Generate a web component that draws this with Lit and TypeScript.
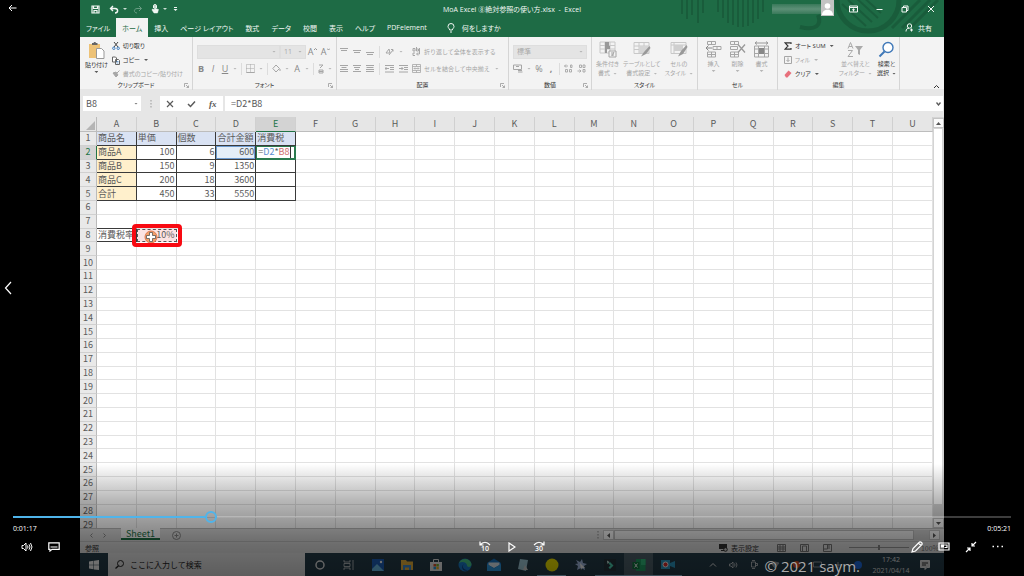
import { LitElement, html, svg, css, nothing } from "lit";
import { customElement } from "lit/decorators.js";
import { classMap } from "lit/directives/class-map.js";
import { styleMap } from "lit/directives/style-map.js";

const icon = (w: number, h: number, body: unknown) =>
  html`<svg width=${w} height=${h} viewBox="0 0 ${w} ${h}" fill="none" stroke="currentColor" aria-hidden="true">${body}</svg>`;
const caret = html`<i class="caret"></i>`;

const reset = css`
  *, *::before, *::after { box-sizing: border-box; }
  button, input, select {
    font: inherit; color: inherit; background: none; border: 0; padding: 0; margin: 0;
    border-radius: 0; appearance: none; outline: 0; min-width: 0;
  }
  button { display: inline-flex; align-items: center; justify-content: center; white-space: nowrap; }
  svg { display: block; flex: none; }
  .caret {
    flex: none; width: 4px; height: 2px; background: currentColor; opacity: .8;
    clip-path: polygon(0 0, 100% 0, 50% 100%);
  }
  .grow { flex: 1; }
`;

@customElement("excel-title")
class ExcelTitle extends LitElement {
  static styles = [reset, css`
    :host { display: block; position: relative; background: #1e6b45; color: #f2f7f4; font-size: 7px; overflow: hidden; }
    .art { position: absolute; right: 0; top: 0; }
    .bar { position: relative; display: grid; grid-template-columns: 1fr auto 1fr; align-items: center; height: 18px; }
    .quick { display: flex; align-items: center; gap: 4px; padding-left: 11px; }
    .quick button + button { margin-left: 5px; }
    .quick .caret + button { margin-left: 2px; }
    .dim { opacity: .35; }
    .title { white-space: pre; }
    .sys { display: flex; align-items: center; justify-content: flex-end; height: 18px; }
    .name { width: 49px; height: 10px; background: linear-gradient(#39795a, #5d9077, #39795a); }
    .face { width: 13px; height: 16px; margin: 0 6px 2px 0; background: #c3c3c3; }
    .sys button { width: 26px; }
    .tabs { position: relative; display: flex; align-items: stretch; height: 19px; padding-right: 12px; }
    .tabs button { padding: 0 6px; }
    .tabs .on { background: #f3f3f3; color: #1e6b45; }
    .tabs .tell { gap: 7px; padding-left: 14px; }
    .tabs .share { gap: 4px; padding: 0; }
  `];
  render() {
    const tabs = ["ファイル", "ホーム", "挿入", "ページ レイアウト", "数式", "データ", "校閲", "表示", "ヘルプ", "PDFelement"];
    return html`
      <svg class="art" width="270" height="37" viewBox="0 0 270 37" fill="none" stroke="#195c3b" stroke-width="2" aria-hidden="true">
        <path d="M8 0v14M13 0v19M18 0v15M24 0v23M29 0v13M44 0v12M49 0v18M54 0v23M59 0v25M64 0v27M69 0v27M74 0v26M79 0v23M84 0v19M89 0v12"/>
        <circle cx="194" cy="0" r="31" stroke-width="5"/>
        <path d="M126 27c16 4 22-2 18-12" stroke-width="4"/>
        <path d="M168 4l24 22M174 0l24 22M180 -4l24 22M187 -5l20 18" stroke-width="2"/>
        <path d="M218 28L246 0M228 28L256 0M238 26L264 0" stroke-width="3"/>
      </svg>
      <div class="bar">
        <div class="quick">
          <button aria-label="保存">${icon(9, 9, svg`<path d="M1 1h7v7H1zM2.500 1v2.500h4V1M3 8V5.500h3V8" stroke-width="1.200"/>`)}</button>
          <button aria-label="元に戻す">${icon(10, 9, svg`<path d="M4 1L1.500 3.500 4 6M1.500 3.500h4.500c4 .5 3 4.500 0 4.500" stroke-width="1.400"/>`)}</button>${caret}
          <button class="dim" aria-label="やり直し">${icon(10, 9, svg`<path d="M6 1l2.500 2.500L6 6M8.500 3.500H4C0 4 1 8 4 8"/>`)}</button><span class="dim">${caret}</span>
          <button aria-label="タッチ">${icon(8, 10, svg`<path d="M2.500 4V2a1.500 1.500 0 0 1 3 0v2" /><path d="M3.400 1.500v4L1.500 5 1 6l2 3h3.500L7.500 5.500 4.700 4.500v-3z" fill="currentColor" stroke-width=".5"/>`)}</button>${caret}
          <button aria-label="カスタマイズ">${icon(5, 5, svg`<path d="M1 .5h3"/><path d="M.5 2h4l-2 2z" fill="currentColor" stroke="none"/>`)}</button>
        </div>
        <div class="title">MoA Excel ⑧絶対参照の使い方.xlsx  -  Excel</div>
        <div class="sys">
          <span class="name"></span>
          <span class="face">${icon(13, 16, svg`<g fill="#fff" stroke="none"><circle cx="6.500" cy="6" r="2.800"/><path d="M1 15c0-7 11-7 11 0z"/></g>`)}</span>
          <button aria-label="リボンの表示オプション">${icon(9, 8, svg`<path d="M.5 1h8v6h-8zM.5 2.500h8M4.500 6.500V4M3.200 5l1.300-1.200L5.800 5"/>`)}</button>
          <button aria-label="最小化">${icon(7, 8, svg`<path d="M.5 4.500h6"/>`)}</button>
          <button aria-label="元に戻す">${icon(8, 8, svg`<path d="M1 2.500h4.500V7H1zM2.500 2.500V1H7v4.500H5.500"/>`)}</button>
          <button aria-label="閉じる">${icon(8, 8, svg`<path d="M1 1l6 6M7 1L1 7"/>`)}</button>
        </div>
      </div>
      <div class="tabs">
        ${tabs.map((t, i) => html`<button class=${classMap({ on: i === 1 })}>${t}</button>`)}
        <button class="tell">${icon(8, 10, svg`<path d="M2.700 7C2.500 5.500 1 5 1 3.500a3 3 0 0 1 6 0C7 5 5.500 5.500 5.300 7zM3 9h2"/>`)}何をしますか</button>
        <span class="grow"></span>
        <button class="share">${icon(9, 9, svg`<circle cx="4.500" cy="3" r="2.200"/><path d="M1 8.500C1 6 2.500 5.200 4 5.200M6.500 5.500v3M5 7h3"/>`)}共有</button>
      </div>`;
  }
}

@customElement("excel-ribbon")
class ExcelRibbon extends LitElement {
  static styles = [reset, css`
    :host {
      display: grid; grid-template-columns: 113fr 144fr 172fr 83fr 106fr 80fr 122fr 44fr;
      height: 52px; background: #f3f3f3; color: #333; font-size: 6px; line-height: 8px;
    }
    section { display: flex; flex-direction: column; min-width: 0; padding-top: 2px; position: relative; border-right: 1px solid #d5d5d5; }
    .last { border: 0; align-items: flex-end; justify-content: flex-end; padding: 0 4px 1px 0; }
    .body { flex: 1; display: flex; min-height: 0; }
    h2 { margin: 0; font-size: 6px; line-height: 9px; font-weight: 400; text-align: center; color: #333; }
    .launch { position: absolute; right: 3px; bottom: 2px; color: #999; }
    .off { color: #a6a6a6; }
    .rows { display: flex; flex-direction: column; justify-content: space-around; }
    .row { display: flex; align-items: center; gap: 4px; height: 14px; }
    .row button { gap: 3px; }
    .big { flex-direction: column; gap: 2px; justify-content: flex-start; padding-top: 2px; }
    .stack { line-height: 9px; text-align: center; }
    .tail { display: inline-flex; align-items: center; gap: 3px; }
    .sep { width: 1px; height: 12px; background: #dcdcdc; }
    .pick { display: flex; align-items: center; justify-content: space-between; height: 14px; background: #e4e4e4; border: 1px solid #dedede; position: relative; font-size: 7px; }
    .pick select { flex: 1; width: 100%; padding: 0 3px; color: #aaa; opacity: 1; }
    .pick .caret { position: absolute; right: 3px; }
    .face { width: 83px; } .size { width: 26px; } .format { width: 74px; }
    .clipboard .body { padding-left: 5px; gap: 4px; }
    .font .body, .num .body { padding: 0 4px; }
    .glyph { color: #888; font-size: 9px; min-width: 8px; }
    .font .rows, .num .rows, .align .rows { gap: 3px; justify-content: center; }
    .font .row:first-child { gap: 0; }
    .font .row:first-child button { width: 13px; gap: 1px; align-items: flex-start; }
    .align { font-feature-settings: normal; }
    .align .body { padding: 0 3px; gap: 4px; align-items: flex-start; }
    .align .rows { height: 100%; }
    .align .row { gap: 5px; }
    .style .body, .cells .body { justify-content: space-evenly; }
    .edit .body { padding-left: 6px; gap: 5px; }
  `];
  head(name: string, launch = false) {
    return html`<h2>${name}</h2>${launch ? html`<button class="launch" aria-label="${name}の設定">${icon(5, 5, svg`<path d="M.5 4V.5H4M2 2l2.500 2.500M4.500 2.500v2h-2" stroke-width=".8"/>`)}</button>` : nothing}`;
  }
  bars(a: number, b: number, c: number, pos = 0) {
    return html`<button aria-label="配置">${icon(8, 9, svg`<path d="M0 ${1 + pos}.5h8M${(8 - a) / 2} ${3 + pos}.5h${a}${b ? `M${c} 5.500h${b}M0 7.500h8` : ""}"/>`)}</button>`;
  }
  render() {
    const indent = (d: string) => html`<button aria-label="インデント">${icon(9, 8, svg`<path d="M0 .5h9M5 2.500h4M5 4.500h4M0 7h9"/><path d=${d}/>`)}</button>`;
    return html`
      <section class="clipboard">
        <div class="body">
          <button class="big">${icon(17, 18, svg`<path d="M1 3h11v14H1z" fill="#edc277" stroke="none"/><path d="M4 3.500V2h1.500C5.500.5 8 .5 8 2h1.500v2H4z" fill="#666" stroke="none"/><path d="M8.500 7.500h5l2.500 2.500v7.500H8.500z" fill="#fff" stroke="#999"/>`)}貼り付け${caret}</button>
          <div class="rows">
            <div class="row"><button>${icon(8, 8, svg`<path d="M2 0l4 5M6 0L2 5" stroke="#444"/><circle cx="1.800" cy="6.300" r="1.200" stroke="#3c7cc0"/><circle cx="6.200" cy="6.300" r="1.200" stroke="#3c7cc0"/>`)}切り取り</button></div>
            <div class="row"><button>${icon(8, 9, svg`<path d="M.5 1h3l1 1v4h-4zM3.500 3.500h3l1 1v4h-4z" fill="#fff" stroke="#666"/><path d="M4.500 5.500h2M4.500 7h2" stroke="#3c7cc0" stroke-width=".7"/>`)}コピー</button>${caret}</div>
            <div class="row off"><button>${icon(8, 8, svg`<path d="M1 3l3 4 2-2-2-3zM4.500 3.500L7.500.5" fill="currentColor"/>`)}書式のコピー/貼り付け</button></div>
          </div>
        </div>
        ${this.head("クリップボード", true)}
      </section>

      <section class="font">
        <div class="body rows">
          <div class="row off">
            <label class="pick face"><select aria-label="フォント" disabled><option></option></select>${caret}</label>
            <label class="pick size"><select aria-label="サイズ" disabled><option>11</option></select>${caret}</label>
            <button class="glyph" aria-label="フォント サイズの拡大">A${icon(3, 3, svg`<path d="M0 2L1.500.5 3 2" stroke-width=".9"/>`)}</button>
            <button class="glyph" aria-label="フォント サイズの縮小">A${icon(3, 3, svg`<path d="M0 .5L1.500 2 3 .5" stroke-width=".9"/>`)}</button>
          </div>
          <div class="row off">
            <button class="glyph"><b>B</b></button><button class="glyph"><em>I</em></button><button class="glyph"><u>U</u></button>${caret}
            <i class="sep"></i>
            <button aria-label="罫線">${icon(9, 9, svg`<path d="M.5.5h8v8h-8zM4.500.5v8M.5 4.500h8" stroke-dasharray="1 1"/><path d="M.5 8.500h8"/>`)}</button>${caret}
            <i class="sep"></i>
            <button aria-label="塗りつぶし">${icon(9, 9, svg`<path d="M4 1l3.500 3.500L4 8 .8 4.500zM8 5v2"/>`)}</button>${caret}
            <button class="glyph">A</button>${caret}
            <i class="sep"></i>
            <button aria-label="ふりがな">${icon(6, 10, svg`<path d="M1 1h4L2 4M1 6h4v3H1zM1 7.500h4"/>`)}</button>${caret}
          </div>
        </div>
        ${this.head("フォント", true)}
      </section>

      <section class="align">
        <div class="body off">
          <div class="rows">
            <div class="row">${this.bars(6, 0, 0)}${this.bars(6, 0, 0, 2)}${this.bars(6, 0, 0, 4)}<i class="sep"></i>
              <button aria-label="方向">${icon(9, 9, svg`<path d="M1 6l3-4 1 4zM4 8l4-5M6 2.500h2v2"/>`)}</button>${caret}</div>
            <div class="row">${this.bars(5, 8, 0)}${this.bars(6, 4, 2)}${this.bars(7, 8, 0)}<i class="sep"></i>${indent("M4 3.500H0M1.500 2L0 3.500 1.500 5")}${indent("M0 3.500h4M2.500 2L4 3.500 2.500 5")}</div>
          </div>
          <div class="rows">
            <div class="row"><button>${icon(9, 9, svg`<path d="M1 4V1.500h2V4zM4.500 0v4h2V2h-2M3 6H1v2.500h2M7.500 1v6H5M6 5.500L4.500 7 6 8.500"/>`)}折り返して全体を表示する</button></div>
            <div class="row"><button>${icon(9, 9, svg`<path d="M.5.5h8v8h-8zM.5 2.500h8M.5 6.500h8M4.500.5v2M4.500 6.500v2M2 4.500h5M3 3.500l-1 1 1 1M6 3.500l1 1-1 1" stroke-width=".8"/>`)}セルを結合して中央揃え</button>${caret}</div>
          </div>
        </div>
        ${this.head("配置", true)}
      </section>

      <section class="num">
        <div class="body rows off">
          <label class="pick format"><select aria-label="表示形式" disabled><option>標準</option></select>${caret}</label>
          <div class="row">
            <button aria-label="通貨">${icon(10, 9, svg`<path d="M.5 1h8v4.500h-8zM3 2.500h3M5 8h4.500M5 6.500h4"/>`)}</button>${caret}
            <button class="glyph">%</button><button class="glyph"><b>,</b></button><i class="sep"></i>
            <button aria-label="桁を増やす">${icon(9, 9, svg`<path d="M4 2H.5M2 .5L.5 2 2 3.500M6.500 1h1.500v2.500H6.500zM1.500 5.500h2V8h-2zM5.500 5.500h2V8h-2z" stroke-width=".9"/>`)}</button>
            <button aria-label="桁を減らす">${icon(9, 9, svg`<path d="M.5 7H4M2.500 5.500L4 7 2.500 8.500M2.500 1h2v2.500h-2zM6 1h2v2.500H6zM6 5.500h2V8H6z" stroke-width=".9"/>`)}</button>
          </div>
        </div>
        ${this.head("数値", true)}
      </section>

      <section class="style">
        <div class="body off">
          <button class="big">${icon(18, 17, svg`<path d="M1 1h15v11H1zM1 4.500h15M1 8h15M6 1v11M11 1v11" stroke="#c8c8c8"/><path d="M6 1h4v4h1v3H8v4H6z" fill="#999" stroke="none"/><path d="M10 10h7v6h-7z" fill="#f3f3f3"/><path d="M12 12h3M12 14h3M15 11l-2 4"/>`)}<span class="stack">条件付き<br><span class="tail">書式${caret}</span></span></button>
          <button class="big">${icon(18, 17, svg`<path d="M1 1.500h15v11H1zM1 5h15M1 8.500h15M6 1.500v11M11 1.500v11" stroke="#c8c8c8"/><path d="M6 5h10v7H6z" fill="#d5d5d5" stroke="none"/><path d="M16.500 5L11 11l-3 4.500 5-2.500 4.500-6z" fill="#999" stroke="none"/>`)}<span class="stack">テーブルとして<br><span class="tail">書式設定${caret}</span></span></button>
          <button class="big">${icon(18, 17, svg`<path d="M1 1.500h15v11H1zM1 4h15M4 1.500v11" stroke="#c8c8c8"/><path d="M4 4h9v6H4z" fill="#cfcfcf" stroke="none"/><path d="M16.500 4L11 10l-3 5.500 5-2.500 4.500-7z" fill="#999" stroke="none"/>`)}<span class="stack">セルの<br><span class="tail">スタイル${caret}</span></span></button>
        </div>
        ${this.head("スタイル")}
      </section>

      <section class="cells">
        <div class="body off">
          <button class="big">${icon(17, 17, svg`<path d="M2.500.5h8v3h-8zM6.500.5v3M8 5.500h8v3H8zM12 5.500v3M2.500 11h8v5h-8zM6.500 11v5M2.500 13.500h8"/><path d="M7 7H1M3.500 4.500L1 7l2.500 2.500" stroke="#888"/>`)}挿入${caret}</button>
          <button class="big">${icon(17, 17, svg`<path d="M1.500.5h8v3h-8zM5.500.5v3M1.500 5.500h7v3h-7zM1.500 11h8v5h-8zM5.500 11v5M1.500 13.500h8"/><path d="M9 3.500l7 8M16 3.500l-7 8" stroke="#999" stroke-width="1.300"/>`)}削除${caret}</button>
          <button class="big">${icon(17, 17, svg`<path d="M1.500 5v11h14V5zM1.500 8h14M1.500 12.500h14M5.500 5v11M11.500 5v11"/><path d="M6 7h5v6H6z" fill="#888" stroke="none"/><path d="M2 2h13M4 .5L2 2l2 1.500M13 .5L15 2l-2 1.500" stroke="#999"/>`)}書式${caret}</button>
        </div>
        ${this.head("セル")}
      </section>

      <section class="edit">
        <div class="body">
          <div class="rows">
            <div class="row"><button>${icon(8, 8, svg`<path d="M7 2V.8H1L4 4 1 7.200h6V6" stroke="#333" stroke-width="1.200"/>`)}オート SUM</button>${caret}</div>
            <div class="row off"><button>${icon(8, 8, svg`<path d="M.5.5h7v7h-7zM4 1.500v4M2.500 4L4 5.500 5.500 4"/>`)}フィル</button>${caret}</div>
            <div class="row"><button>${icon(8, 8, svg`<path d="M.5 5l4-4.500L7.500 3l-4 4.500H2z" fill="#e8707c" stroke="none"/>`)}クリア</button>${caret}</div>
          </div>
          <button class="big off">${icon(17, 17, svg`<path d="M1 7.500l2.500-6 2.500 6M2 5.500h3M1 9.500h4.500l-4.500 6H6" stroke="#aaa"/><path d="M8 5h8l-3 4v5l-2-1V9z" fill="#aaa" stroke="none"/>`)}<span class="stack">並べ替えと<br><span class="tail">フィルター${caret}</span></span></button>
          <button class="big">${icon(17, 17, svg`<circle cx="10" cy="6.500" r="5" fill="#fff" stroke="#3f78b8" stroke-width="1.400"/><path d="M6.500 10.500L1.500 15.500" stroke="#3f78b8" stroke-width="2"/>`)}<span class="stack">検索と<br><span class="tail">選択${caret}</span></span></button>
        </div>
        ${this.head("編集")}
      </section>
      <section class="last"><button aria-label="リボンを折りたたむ">${icon(7, 5, svg`<path d="M1 4l2.500-2.500L6 4"/>`)}</button></section>`;
  }
}

@customElement("excel-sheet")
class ExcelSheet extends LitElement {
  static styles = [reset, css`
    :host { display: flex; flex-direction: column; min-height: 0; background: #e6e6e6; color: #5a5a5a; font-size: 9px; }
    .formula { display: flex; align-items: stretch; height: 28px; padding: 7px 1px 6px 3px; gap: 2px; }
    .formula > * { background: #fff; }
    .formula .dots { background: none; width: 15px; display: grid; place-items: center; color: #999; }
    .name { display: flex; align-items: center; width: 58px; padding: 0 3px; }
    .name input { flex: 1; width: 100%; }
    .tools { display: flex; width: 63px; justify-content: space-around; }
    .fx { font-family: "Liberation Serif", serif; font-weight: 700; font-style: italic; }
    .entry { flex: 1; display: flex; align-items: center; padding: 0 2px 0 6px; }
    .entry input { flex: 1; }
    .main { flex: 1; min-height: 0; display: flex; }
    .clip { flex: 1; overflow: hidden; position: relative; }
    table { width: 100%; height: 101%; table-layout: fixed; border-collapse: separate; border-spacing: 0; background: #fff; }
    th, td { padding: 0; font-weight: inherit; line-height: 12px; white-space: nowrap; }
    thead th { height: 15px; background: #e6e6e6; border-right: 1px solid #d0d0d0; border-bottom: 1px solid #bdbdbd; }
    thead th:first-child { width: 17px; border-right-color: #bbb; }
    tbody th { background: #e9e9e9; border-right: 1px solid #bbb; border-bottom: 1px solid #d0d0d0; }
    thead .hot, tbody .hot { background: #d3d3d3; color: #217346; }
    thead .hot { border-bottom-color: #217346; }
    tbody .hot { border-right-color: #217346; }
    .corner { display: block; width: 9px; height: 9px; margin: 3px 0 0 6px; background: #b5b5b5; clip-path: polygon(100% 0, 100% 100%, 0 100%); }
    td { border-right: 1px solid #e2e2e2; border-bottom: 1px solid #e2e2e2; padding: 0 1px; }
    td.box { border-color: #3a3a3a; }
    td.under { border-bottom-color: #3a3a3a; }
    td.n { text-align: right; }
    td.blue { background: #d9e2f3; }
    td.tan { background: #fff0cc; }
    td.ref { background: #e4eef8; box-shadow: inset 0 0 0 1px #6c9bd0; }
    td.edit { box-shadow: inset 0 0 0 1px #2a7a4f; background: #fff; padding: 0 0 0 2px; border-color: #2a7a4f; }
    .edit .d { color: #5b8fd0; } .edit .b { color: #d07070; border-right: 1px solid #333; }
    td.rate { position: relative; background: #fbe3e3; border: 1px dashed #555; line-height: 10px; }
    .ring { position: absolute; inset: -6px; border: 4px solid #f80a12; border-radius: 4px; }
    .spot { position: absolute; left: 6px; top: 0; }
    .vbar { width: 11px; display: flex; flex-direction: column; background: #d4d4d4; padding: 1px 1px 0 0; }
    .vbar button, .hbar button { background: #fafafa; border: 1px solid #c4c4c4; width: 11px; height: 10px; flex: none; color: #555; }
    .vbar .thumb { flex: 1; background: #fff; margin: 1px 1px 14px 1px; }
    .foot { display: flex; align-items: center; height: 13px; border-top: 1px solid #bbb; padding-left: 9px; background: #dedede; color: #888; }
    .foot nav { display: flex; gap: 8px; align-items: center; }
    .sheet { background: #fff; color: #217346; height: 12px; padding: 0 5px; border-bottom: 2px solid #217346; margin: 0 12px 2px 6px; align-self: flex-start; }
    .hbar { display: flex; width: 337px; margin: 0 4px; background: #cfcfcf; }
    .hbar .thumb { flex: 1; background: #f2f2f2; border: 1px solid #bbb; margin-right: 15px; }
    .status { display: flex; align-items: center; height: 12px; border-top: 1px solid #c5c5c5; background: #e2e2e2; font-size: 7px; padding: 0 5px; color: #333; gap: 3px; }
    .views { display: flex; gap: 14px; margin: 0 8px 0 15px; color: #777; }
    .zoom { width: 72px; height: 8px; background: linear-gradient(#999, #999) center / 60px 1px no-repeat; }
    .zoom::-webkit-slider-thumb { appearance: none; width: 2px; height: 5px; background: #888; }
    .pct { color: #777; margin-left: 3px; }
  `];
  render() {
    const cols = "ABCDEFGHIJKLMNOPQRSTU".split("");
    const data: Record<number, string[]> = {
      1: ["商品名", "単価", "個数", "合計金額", "消費税"],
      2: ["商品A", "100", "6", "600", ""],
      3: ["商品B", "150", "9", "1350", ""],
      4: ["商品C", "200", "18", "3600", ""],
      5: ["合計", "450", "33", "5550", ""],
      8: ["消費税率", "10%"],
    };
    const cell = (r: number, c: number) => {
      const v = data[r]?.[c];
      if (r === 2 && c === 4) return html`<td class="edit">=<span class="d">D2</span>*<span class="b">B8</span></td>`;
      if (r === 8 && c === 1) return html`<td class="rate n">10%<span class="spot">${icon(14, 14, svg`<circle cx="7" cy="7" r="6" fill="#f2a06a" stroke="#e07a50"/><path d="M5.500 2.500h3v3h3v3h-3v3h-3v-3h-3v-3h3z" fill="#fff" stroke="#555" stroke-width=".8"/>`)}</span><span class="ring"></span></td>`;
      return html`<td class=${classMap({
        box: v !== undefined, under: r === 7 && c === 0, n: r > 1 && c > 0, blue: r === 1 && c < 5,
        tan: r > 1 && r < 6 && c === 0, ref: r === 2 && c === 3,
      })}>${v ?? ""}</td>`;
    };
    return html`
      <div class="formula">
        <label class="name"><input aria-label="名前ボックス" value="B8">${caret}</label>
        <span class="dots">${icon(2, 8, svg`<path d="M1 0v8" stroke-dasharray="1.500 1.500"/>`)}</span>
        <div class="tools">
          <button aria-label="キャンセル">${icon(8, 8, svg`<path d="M1 1l6 6M7 1L1 7" stroke-width="1.200"/>`)}</button>
          <button aria-label="入力">${icon(9, 8, svg`<path d="M1 4l2.500 2.500L8 1.500" stroke-width="1.500"/>`)}</button>
          <button class="fx" aria-label="関数の挿入">fx</button>
        </div>
        <label class="entry"><input aria-label="数式バー" value="=D2*B8">${icon(5, 4, svg`<path d="M.5.5L2.500 3 4.500.5" stroke-width="1.300"/>`)}</label>
      </div>
      <div class="main">
        <div class="clip">
          <table>
            <thead><tr><th><span class="corner"></span></th>${cols.map((c) => html`<th class=${classMap({ hot: c === "E" })}>${c}</th>`)}</tr></thead>
            <tbody>${Array.from({ length: 29 }, (_, i) => html`<tr><th class=${classMap({ hot: i === 1 })}>${i + 1}</th>${cols.map((_c, c) => cell(i + 1, c))}</tr>`)}</tbody>
          </table>
        </div>
        <div class="vbar">
          <button aria-label="上へ">${icon(5, 3, svg`<path d="M0 3h5L2.500 0z" fill="currentColor" stroke="none"/>`)}</button>
          <div class="thumb"></div>
          <button aria-label="下へ">${icon(5, 3, svg`<path d="M0 0h5L2.500 3z" fill="currentColor" stroke="none"/>`)}</button>
        </div>
      </div>
      <div class="foot">
        <nav><button aria-label="前">${icon(5, 5, svg`<path d="M3.500.5l-2 2 2 2"/>`)}</button><button aria-label="次">${icon(5, 5, svg`<path d="M1.500.5l2 2-2 2"/>`)}</button><button class="sheet">Sheet1</button></nav>
        <button aria-label="新しいシート">${icon(9, 9, svg`<circle cx="4.500" cy="4.500" r="4"/><path d="M4.500 2.500v4M2.500 4.500h4"/>`)}</button>
        <span class="grow"></span>
        ${icon(2, 8, svg`<path d="M1 0v8" stroke-dasharray="1.500 1.500"/>`)}
        <div class="hbar">
          <button aria-label="左へ">${icon(3, 5, svg`<path d="M3 0v5L0 2.500z" fill="currentColor" stroke="none"/>`)}</button>
          <div class="thumb"></div>
          <button aria-label="右へ">${icon(3, 5, svg`<path d="M0 0v5l3-2.500z" fill="currentColor" stroke="none"/>`)}</button>
        </div>
      </div>
      <div class="status">
        参照<span class="grow"></span>
        ${icon(9, 8, svg`<path d="M0 0h8v5H0zM2 6h3v1H2z" fill="#333" stroke="none"/><circle cx="6.500" cy="5.500" r="1.800" stroke="#333" fill="#ccc"/>`)}表示設定
        <span class="views">
          ${icon(9, 8, svg`<path d="M.5.5h8v7h-8zM.5 3h8M.5 5h8M3 .5v7M6 .5v7"/>`)}
          ${icon(9, 8, svg`<path d="M.5.5h8v7h-8zM2.500 2h4v5.500h-4z"/>`)}
          ${icon(9, 8, svg`<path d="M.5.5h8v7h-8zM.5 5h4V.5M6 .5V5"/>`)}
        </span>
        <input class="zoom" type="range" aria-label="ズーム"><span class="pct">100%</span>
      </div>`;
  }
}

@customElement("task-bar")
class TaskBar extends LitElement {
  static styles = [reset, css`
    :host { display: flex; position: relative; height: 23px; background: #253d4a; color: #e8e8e8; font-size: 8px; }
    .start { width: 28px; background: #253d4a; }
    .search { display: flex; align-items: center; gap: 6px; width: 197px; padding-left: 7px; background: #e9e9e9; color: #222; font-feature-settings: normal; }
    .search input { flex: 1; }
    .search input::placeholder { color: #222; opacity: 1; }
    .apps { display: flex; }
    .apps button { width: 29px; }
    .apps .open { border-bottom: 1px solid #9ccbe8; padding-top: 1px; }
    .apps .on { background: #4f626c; }
    .tray { display: flex; align-items: center; gap: 7px; padding-right: 14px; }
    .icons { display: flex; align-items: center; gap: 12px; }
    .clock { font-size: 7px; line-height: 11px; text-align: center; width: 44px; }
  `];
  render() {
    const apps: [string, unknown, string?][] = [
      ["Cortana", svg`<circle cx="7" cy="7" r="4" stroke-width="1.500"/>`],
      ["タスク ビュー", svg`<path d="M2 2v2h6V2M2 12v-2h6v2M2 5.500h6v3H2zM11 2v10" opacity=".7"/>`],
      ["フォト", svg`<path d="M1 1h12v12H1z" fill="#1d62c0" stroke="none"/><path d="M1 11l5-5 7 7H1z" fill="#6ec4f2" stroke="none"/><circle cx="10" cy="4" r="1.200" fill="#fff" stroke="none"/>`],
      ["エクスプローラー", svg`<path d="M1 2h5l1 1.500h6V12H1z" fill="#f0b83c" stroke="none"/><path d="M3 7h8v5H9V9.500H5V12H3z" fill="#3f8fd8" stroke="none"/>`],
      ["ストア", svg`<path d="M1 4h12v9H1z" fill="#f2f2f2" stroke="none"/><path d="M4.500 4V1.500h5V4"/><g stroke="none"><path d="M4.500 6H7v2.500H4.500z" fill="#e5532d"/><path d="M7.300 6h2.500v2.500H7.300z" fill="#7fba2a"/><path d="M4.500 8.800H7v2.500H4.500z" fill="#2aa3e8"/><path d="M7.300 8.800h2.500v2.500H7.300z" fill="#f5b81e"/></g>`],
      ["Edge", svg`<g stroke="none"><circle cx="7" cy="7" r="6.500" fill="#1a7fd0"/><path d="M1 5C3-1 13 0 13.500 6.500c0 3-4.500 3-4.500 1C9 4 4 3 1 5z" fill="#4bcf8c"/><path d="M6 6c-3 3 0 7 5 6-6 3-9-3-5-6z" fill="#0d3f80"/></g>`],
      ["メール", svg`<g stroke="none"><path d="M0 5l7-4.500L14 5v8H0z" fill="#1677c8"/><path d="M1.500 4.500h11V7L7 10 1.500 7z" fill="#e8f3fb"/><path d="M0 6l7 4.500L14 6v7H0z" fill="#2fa0ea"/></g>`],
      ["メモ帳", svg`<path d="M4 1l8 1-2 11-8-2z" fill="#a5d0df" stroke="none"/><path d="M9 7l3 5H7z" fill="#d8d8d8" stroke="none"/>`],
      ["録画", svg`<circle cx="7" cy="7" r="6.500" fill="#f6ea00" stroke="none"/>`, "open"],
      ["ペイント", svg`<path d="M2 2l4 2 2-3 1 4 4 1-3 2 1 4-4-2-4 2 1-4-3-2 3-.5z" fill="#a9c0e8" stroke="none"/><path d="M6 5l5 5-3 0-1 2z" fill="#fff" stroke="none"/>`],
      ["Filmora", svg`<path d="M1 1h12v12H1z" fill="#26343c" stroke="none"/><path d="M7 4l3.500 3.500L7 11 5.500 9.500l2-2-2-2z" fill="#4fd8b8" stroke="none"/><path d="M4 2.500l2.500 1.500L4.500 6z" fill="#d9fff5" stroke="none"/>`, "open"],
      ["Excel", svg`<g stroke="none"><path d="M4 1h9.500v12H4z" fill="#21a366"/><path d="M9 1h4.500v6H9z" fill="#33c481"/><path d="M.5 4h7v7h-7z" fill="#107c41"/></g><path d="M2.500 5.500l3 4M5.500 5.500l-3 4" stroke="#fff"/>`, "open on"],
      ["レコーダー", svg`<path d="M0 2h9v9H0zM9 5l5-2v7L9 8z" fill="#2c9cc8" stroke="none"/><circle cx="4.500" cy="6.500" r="2.500" fill="#e02c2c" stroke="#fff"/>`, "open"],
    ];
    return html`
      <button class="start" aria-label="スタート">${icon(10, 10, svg`<path d="M0 1.500l4.500-.7v4H0zM5 .7l5-.7v4.800H5zM0 5.300h4.500v4L0 8.600zM5 5.300h5V10l-5-.6z" fill="#fff" stroke="none"/>`)}</button>
      <label class="search">${icon(9, 9, svg`<circle cx="5.500" cy="3.500" r="3"/><path d="M3.500 5.700L.5 8.500" stroke-width="1.300"/>`)}<input placeholder="ここに入力して検索" aria-label="検索"></label>
      <div class="apps">${apps.map(([n, body, cls]) => html`<button class=${cls ?? ""} aria-label=${n}>${icon(14, 14, body)}</button>`)}</div>
      <span class="grow"></span>
      <div class="tray">
        <div class="icons">
          ${icon(8, 8, svg`<path d="M1 5.500L4 2.500l3 3"/>`)}
          ${icon(9, 8, svg`<path d="M.5 3v2h1.500l2 2V1L2 3zM5.500 2.500q1 1.500 0 3M7 1.500q2 2.500 0 5" opacity=".7"/>`)}
          ${icon(8, 9, svg`<path d="M1.500 2h4v5h-4zM5.500 3.500h2v2h-2M2 .5h3M2 8.500h3" opacity=".7"/>`)}
          ${icon(10, 8, svg`<path d="M1 2q4-2 8 0L5 7z" fill="currentColor" opacity=".6"/>`)}
          ${icon(9, 9, svg`<circle cx="4.500" cy="4.500" r="3.500" fill="#e0502c" stroke="none"/>`)}
          ${icon(9, 8, svg`<path d="M.5 1h8v5h-8z" opacity=".6"/>`)}
          ${icon(8, 8, svg`<path d="M4 1v6M1 4h6" opacity=".6"/>`)}
          ${icon(8, 8, svg`<circle cx="4" cy="4" r="4" fill="#1f6fe8" stroke="none"/>`)}
        </div>
        <div class="clock">17:42<br>2021/04/14</div>
        <button aria-label="通知">${icon(10, 10, svg`<path d="M.5.5h9v7H7l-2 2v-2H.5z" fill="#ddd"/><path d="M2 3h6M2 5h4" stroke="#333"/>`)}</button>
      </div>`;
  }
}

@customElement("player-controls")
class PlayerControls extends LitElement {
  static styles = [reset, css`
    :host { display: flex; flex-direction: column; position: absolute; inset: 0; color: #fff; font-size: 7px; }
    .back { align-self: flex-start; padding: 4px 8px; }
    .middle { flex: 1; display: flex; align-items: center; padding: 48px 0 0 4px; }
    .shade { position: absolute; inset: auto 0 0 0; height: 112px; background: linear-gradient(transparent, rgba(0,0,0,.28) 32%, rgba(0,0,0,.52) 72%, rgba(0,0,0,.6)); }
    .panel { position: relative; padding: 0 13px 18px; }
    .seek {
      display: block; width: 100%; height: 12px;
      background: linear-gradient(to right, #4fb4ea calc(var(--at) - 6px), transparent calc(var(--at) - 6px), transparent calc(var(--at) + 6px), rgba(255,255,255,.24) calc(var(--at) + 6px)) center / 100% 2px no-repeat;
    }
    .seek::-webkit-slider-thumb { appearance: none; width: 12px; height: 12px; border: 2px solid #4fb4ea; border-radius: 50%; background: transparent; }
    .times { display: flex; justify-content: space-between; line-height: 12px; }
    .keys { display: grid; grid-template-columns: 1fr auto 1fr; height: 23px; align-items: center; }
    .keys div { display: flex; }
    .keys button { width: 27px; height: 20px; }
    .keys .end { justify-content: flex-end; }
    .mark { position: absolute; right: 164px; bottom: 0; color: #aaa; font-size: 15px; line-height: 20px; white-space: nowrap; }
    .skip { flex-direction: column; line-height: 6px; font-weight: 600; }
  `];
  at = 0.195;
  render() {
    return html`
      <div class="shade"></div>
      <button class="back" aria-label="戻る">${icon(9, 8, svg`<path d="M8.500 4H1M4 1L1 4l3 3"/>`)}</button>
      <div class="middle"><button aria-label="前へ">${icon(8, 14, svg`<path d="M7 1L1.500 7 7 13" stroke-width="1.200"/>`)}</button></div>
      <span class="mark">© 2021 saym.</span>
      <div class="panel">
        <input class="seek" type="range" aria-label="再生位置" min="0" max="1" step="0.001" .value=${String(this.at)}
          style=${styleMap({ "--at": `calc(6px + (100% - 12px) * ${this.at})` })}>
        <div class="times"><span>0:01:17</span><span>0:05:21</span></div>
        <div class="keys">
          <div>
            <button aria-label="音量">${icon(12, 10, svg`<path d="M1 3.500v3h1.500L5 9V1L2.500 3.500zM6.500 3.500q1 1.500 0 3M8 2.300q2 2.700 0 5.400M9.500 1q3 4 0 8"/>`)}</button>
            <button aria-label="字幕">${icon(12, 10, svg`<path d="M.8.8h10.400v6.500H4l-2 1.700V7.300H.8zM2.500 5h7" stroke-width="1.200"/>`)}</button>
          </div>
          <div>
            <button class="skip" aria-label="10 秒戻る">${icon(12, 5, svg`<path d="M1 4Q6-1.500 11 4M1 .5V4h3.500" stroke-width="1.200"/>`)}10</button>
            <button aria-label="再生">${icon(8, 10, svg`<path d="M1 1l6 4-6 4z" stroke-width="1.200"/>`)}</button>
            <button class="skip" aria-label="30 秒進む">${icon(12, 5, svg`<path d="M1 4Q6-1.500 11 4M11 .5V4H7.500" stroke-width="1.200"/>`)}30</button>
          </div>
          <div class="end">
            <button aria-label="編集">${icon(12, 12, svg`<path d="M1 11l1-3.500L8.500 1q1-.5 2 .5t.5 2L4.500 10zM7.500 2l2.500 2.500" stroke-width="1.200"/>`)}</button>
            <button aria-label="ミニ表示">${icon(12, 9, svg`<path d="M1 1h10v7H1zM3 3h6v2.500H6.500" stroke-width="1.200"/><path d="M3 3h3v2.500H3z" fill="currentColor" stroke="none"/>`)}</button>
            <button aria-label="全画面表示の終了">${icon(12, 12, svg`<path d="M1 11l3.500-3.500M2 7h3v3M11 1L7.500 4.500M7 2v3h3" stroke-width="1.200"/>`)}</button>
            <button aria-label="その他">${icon(11, 3, svg`<path d="M.5 1.500H11" stroke-width="1.500" stroke-dasharray="1.500 3"/>`)}</button>
          </div>
        </div>
      </div>`;
  }
}

@customElement("app-root")
class AppRoot extends LitElement {
  static styles = css`
    :host {
      display: flex; justify-content: center; position: relative; height: 100vh; overflow: hidden; background: #000;
      font-family: "Open Sans", "Noto Sans CJK JP", sans-serif; font-feature-settings: "palt";
    }
    .frame { display: flex; flex-direction: column; height: 100%; aspect-ratio: 3 / 2; }
    .sheet { flex: 1; font-family: "Noto Sans CJK JP", sans-serif; font-feature-settings: normal; font-weight: 400; }
  `;
  render() {
    return html`
      <main class="frame">
        <excel-title></excel-title>
        <excel-ribbon></excel-ribbon>
        <excel-sheet class="sheet"></excel-sheet>
        <task-bar></task-bar>
      </main>
      <player-controls></player-controls>`;
  }
}
